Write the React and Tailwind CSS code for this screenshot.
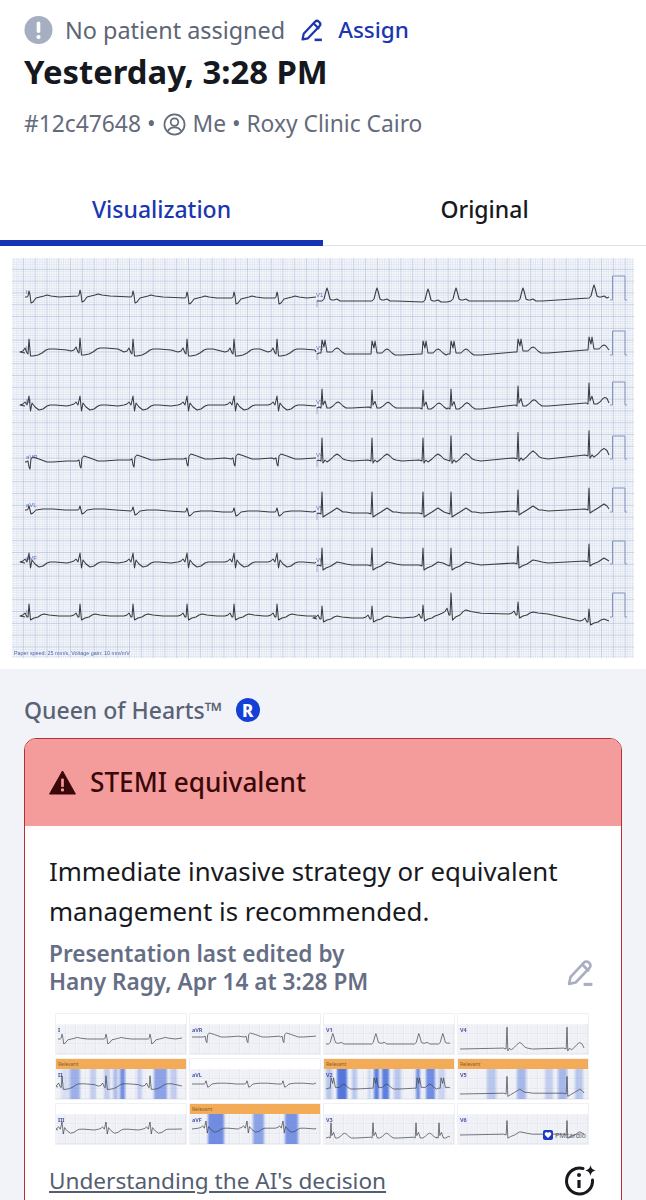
// ECG report screen
const SHAPES = {
  I: [[-2, 0], [-1, -1], [0, -6], [1, -2], [2, 6], [4, 5], [7, 1], [11, 0], [15, -1], [18, -2], [22, -1], [30, 0]],
  II: [[-9, -1], [-6, -2], [-4, -5], [-2, 0], [-1, 1], [0, -14], [1.5, 3], [4, 3], [9, 2], [13, 0], [17, -3], [20, -4], [26, -4], [38, -3]],
  III: [[-9, -1], [-6, -2], [-4, -4], [-2, -1], [0, -10], [1.5, 5], [3, -3], [6, 1], [10, 4], [14, 3], [18, 0], [21, -1], [26, -1], [38, 0]],
  aVR: [[-3, 0], [-1, -1], [0, 5], [1, 7], [2, -3], [4, -5], [10, -3], [18, 0], [24, 0], [38, -1]],
  aVL: [[-2, 0], [-1, -1], [0, -4], [1, 0], [2, 4], [4, 3], [7, 0], [14, -1], [24, -1], [36, 0]],
  V1: [[-4, 0], [-2, -2], [0, -10], [1, -13], [2, -10], [4, -2], [6, -1], [8, -1], [11, -2], [14, 0], [20, 0]],
  V2: [[-3, -1], [-1, -1], [0, -14], [2, -7], [3, -14], [5, -2], [7, -2], [10, -2], [13, -5], [15, -6], [17, -5], [20, -2], [23, 0], [30, 0]],
  V3: [[-3, -1], [-1, 0], [0, -19], [1, -3], [3, -7], [5, 0], [8, 0], [11, -2], [14, -5], [16, -6], [18, -5], [21, -2], [24, 0], [30, 0]],
  V4: [[-4, -1], [-1, 0], [0, -23], [1, 2], [3, -1], [5, 1], [9, -2], [12, -5], [15, -7], [18, -5], [21, -2], [24, -1], [30, 0]],
  V5: [[-4, -1], [-1, 0], [0, -22], [1, 3], [4, 1], [9, -2], [12, -4], [15, -6], [18, -4], [21, -2], [24, -2], [30, -1]],
  V6: [[-4, -1], [-1, 0], [0, -18], [1, 4], [4, 2], [9, 0], [12, -2], [15, -4], [20, -3], [24, -2], [30, -1]],
  R: [[-9, -1], [-6, -2], [-4, -4], [-2, 0], [-1, 0], [0, -13], [1.5, 3], [5, 1], [9, 0], [12, -2], [15, -3], [20, -2], [30, -1]],
};

const LEFT = [29, 80, 133, 187, 234, 277];
const RIGHT = [322, 372, 423, 451, 518, 589];

const ROWS = [
  { label: 'I', right: 'V1', rs: 'V1', ls: 'I', lb: [297, 296, 297, 298, 298, 298], rb: [301, 301, 302, 301, 301, 298], cal: 300, top: 276, shift: 4 },
  { label: 'II', right: 'V2', rs: 'V2', ls: 'II', lb: [353, 352, 353, 353, 353, 353], rb: [354, 355, 355, 355, 353, 351], cal: 355, top: 331 },
  { label: 'III', right: 'V3', rs: 'V3', ls: 'III', lb: [406, 406, 406, 406, 406, 406], rb: [408, 408, 409, 409, 406, 404], cal: 405, top: 382, ra: [1, 0.95, 1, 1.05, 1.05, 1.1] },
  { label: 'aVR', right: 'V4', rs: 'V4', ls: 'aVR', lb: [462, 461, 460, 459, 459, 459], rb: [461, 461, 461, 461, 459, 456], cal: 459, top: 436, ra: [1, 1, 1, 1.1, 1.15, 1.1] },
  { label: 'aVL', right: 'V5', rs: 'V5', ls: 'aVL', lb: [510, 510, 511, 512, 512, 512], rb: [514, 514, 514, 514, 512, 510], cal: 512, top: 488 },
  { label: 'aVF', right: 'V6', rs: 'V6', ls: 'III', lb: [563, 563, 563, 563, 563, 563], rb: [566, 566, 566, 566, 564, 562], cal: 564, top: 541 },
  { label: 'II', right: '', rs: 'R', ls: 'R', lb: [617, 617, 617, 617, 617, 617], rb: [619, 619, 618, 615, 615, 622], cal: 617, top: 593, ra: [1, 1, 1, 1.7, 1, 1] },
];

// one trace: the beat shape repeated at each beat, cut short where the next beat starts
function tracePath(beats, shape, bases, startX, endX, sx = 1, sy = 1, amps) {
  const pts = [[startX, bases[0]]];
  beats.forEach((b, i) => {
    const limit = i < beats.length - 1 ? beats[i + 1] + shape[0][0] * sx : endX;
    const amp = amps ? amps[i] : 1;
    shape.forEach(([dx, dy]) => {
      const x = b + dx * sx;
      if (x < limit) pts.push([x, bases[i] + dy * sy * amp]);
    });
  });
  pts.push([endX, bases[bases.length - 1] - 1]);
  return 'M' + pts.map((p) => `${p[0].toFixed(1)} ${p[1].toFixed(1)}`).join('L');
}

function MainChart() {
  return (
    <svg viewBox="12 258 622 400" className="block w-full h-[400px] blur-[0.35px]">
      <defs>
        <pattern id="fine" x="12" y="258" width="2.36" height="2.36" patternUnits="userSpaceOnUse">
          <path d="M2.36 0V2.36M0 2.36H2.36" stroke="#ced7e8" strokeWidth="0.7" fill="none" />
        </pattern>
        <pattern id="major" x="12" y="258" width="11.8" height="11.8" patternUnits="userSpaceOnUse">
          <path d="M11.8 0V11.8M0 11.8H11.8" stroke="#aab7d0" strokeWidth="0.9" fill="none" />
        </pattern>
      </defs>
      <rect x="12" y="258" width="622" height="400" fill="#f5f7fb" />
      <rect x="12" y="258" width="622" height="400" fill="url(#fine)" />
      <rect x="12" y="258" width="622" height="400" fill="url(#major)" />
      {ROWS.map((r, i) => {
        const rightBeats = RIGHT.map((b) => b + (r.shift || 0));
        return (
          <g key={i}>
            <text x="26" y={r.lb[0] - 3} fontSize="6" fill="#5b6fb8" fontFamily="Liberation Sans, sans-serif">{r.label}</text>
            {r.right && <text x="316" y={r.rb[0] - 4} fontSize="6" fill="#5b6fb8" fontFamily="Liberation Sans, sans-serif">{r.right}</text>}
            {r.right && <path d={`M317 ${r.rb[0] - 1}v7`} stroke="#8fa0c8" strokeWidth="0.8" />}
            <path d={tracePath(LEFT, SHAPES[r.ls], r.lb, 25, 316)} fill="none" stroke="#383c43" strokeWidth="1.05" strokeLinejoin="round" />
            <path d={tracePath(rightBeats, SHAPES[r.rs], r.rb, 317, 609, 1, 1, r.ra)} fill="none" stroke="#383c43" strokeWidth="1.05" strokeLinejoin="round" />
            <path d={`M610 ${r.cal}H612.5V${r.top}H625V${r.cal}H627`} fill="none" stroke="#8496bf" strokeWidth="1" />
          </g>
        );
      })}
      <text x="14" y="655" fontSize="5.4" fill="#4d68ae" fontFamily="Liberation Sans, sans-serif">Paper speed: 25 mm/s, Voltage gain: 10 mm/mV</text>
    </svg>
  );
}

const THUMBS = [
  { label: 'I', shape: 'I', beats: [6, 50, 94], base: 15 },
  { label: 'aVR', shape: 'aVR', beats: [16, 57, 93], base: 13 },
  { label: 'V1', shape: 'V1', beats: [8, 51, 94, 118], base: 20 },
  { label: 'V4', shape: 'V4', beats: [49, 109], base: 25, sy: 0.95 },
  { label: 'II', shape: 'II', beats: [6, 50, 94], base: 18, relevant: true, bands: [[5, 9, 0.12], [14, 10, 0.45], [34, 6, 0.25], [48, 6, 0.25], [57, 5, 0.35], [64, 5, 0.7], [81, 5, 0.25], [98, 13, 0.55], [114, 7, 0.25]] },
  { label: 'aVL', shape: 'aVL', beats: [16, 57, 93], base: 15, relevant: false },
  { label: 'V2', shape: 'V2', beats: [7, 50, 93, 117], base: 20, relevant: true, bands: [[2, 6, 0.3], [13, 10, 0.85], [28, 5, 0.3], [44, 3, 0.2], [50, 5, 0.8], [58, 7, 0.8], [70, 7, 0.3], [92, 4, 0.7], [102, 9, 0.7], [114, 7, 0.2]] },
  { label: 'V5', shape: 'V5', beats: [49, 109], base: 25, relevant: true, bands: [[29, 9, 0.3], [59, 9, 0.4], [87, 8, 0.25], [100, 9, 0.4], [117, 8, 0.3]] },
  { label: 'III', shape: 'III', beats: [6, 50, 94], base: 16 },
  { label: 'aVF', shape: 'III', beats: [16, 57, 93], base: 15, relevant: true, bands: [[18, 16, 0.7], [63, 11, 0.55], [95, 13, 0.65]] },
  { label: 'V3', shape: 'V3', beats: [7, 49, 92, 115], base: 24 },
  { label: 'V6', shape: 'V6', beats: [49, 109], base: 21, logo: true },
];

function Thumb({ t, index }) {
  const start = 2;
  const bases = t.beats.map(() => t.base);
  return (
    <div className="relative flex flex-col h-10 bg-white ring-1 ring-[#f0f1f5]">
      <div className={`h-2.5 pl-0.5 text-[5px] leading-[10px] ${t.relevant ? 'bg-[#f3ab57] text-[#7d5f2a]' : 'bg-white'}`}>
        {t.relevant ? 'Relevant' : ''}
      </div>
      <svg viewBox="0 0 130 30" className="block w-[130px] h-[30px] blur-[0.25px]">
        <defs>
          <pattern id={`thumbgrid${index}`} width="10" height="10" patternUnits="userSpaceOnUse">
            <path d="M2 0V10M4 0V10M6 0V10M8 0V10M0 2H10M0 4H10M0 6H10M0 8H10" stroke="#e6e8ef" strokeWidth="0.4" />
            <path d="M10 0V10M0 10H10" stroke="#c9cdd8" strokeWidth="0.5" />
          </pattern>
          <filter id={`soft${index}`} x="-20%" width="140%">
            <feGaussianBlur stdDeviation="1 0" />
          </filter>
        </defs>
        <rect width="130" height="30" fill="#f6f7fa" />
        <rect width="130" height="30" fill={`url(#thumbgrid${index})`} />
        <g filter={`url(#soft${index})`}>
          {t.bands && t.bands.map((b, i) => (
            <rect key={i} x={b[0]} width={b[1]} height="30" fill="#3a62d8" opacity={b[2]} />
          ))}
        </g>
        <text x="2" y="8" fontSize="5.5" fontWeight="700" fill="#4a55a8" fontFamily="Noto Sans, sans-serif">{t.label}</text>
        <path d={tracePath(t.beats, SHAPES[t.shape], bases, start, 126, 0.85, t.sy || 0.8)} fill="none" stroke="#3c4046" strokeWidth="0.7" strokeLinejoin="round" />
      </svg>
      {t.logo && (
        <div className="absolute right-0.5 bottom-1 flex items-center gap-0.5">
          <svg width="10" height="10" viewBox="0 0 10 10">
            <rect width="10" height="10" rx="2" fill="#1a3bc0" />
            <path d="M5 8 2 5a1.5 1.5 0 0 1 3-2 1.5 1.5 0 0 1 3 2z" fill="#fff" />
          </svg>
          <span className="text-[7px] leading-none text-[#5a5f6b] font-['Noto_Sans',sans-serif]">PMcardio</span>
        </div>
      )}
    </div>
  );
}

function PencilIcon({ className, color }) {
  return (
    <svg viewBox="0 0 28 28" className={className} fill="none" stroke={color} strokeWidth="2.6" strokeLinejoin="round" strokeLinecap="round">
      <path d="M3 25l1.3-6.5L17.5 4.3a3.2 3.2 0 0 1 4.5 0l.7.7a3.2 3.2 0 0 1 0 4.5L9.3 23.7z" />
      <path d="M16 6.5l5.5 5.5" />
      <path d="M17 25.5h8.5" strokeWidth="3" strokeLinecap="butt" />
    </svg>
  );
}

export default function App() {
  return (
    <div className="h-[1200px] overflow-hidden bg-white font-['Noto_Sans',sans-serif]">
      {/* Header */}
      <div className="pl-6 pt-4">
        <div className="flex items-center h-7">
          <svg viewBox="0 0 29 28" className="w-[29px] h-7 shrink-0">
            <circle cx="14.5" cy="14" r="14" fill="#a6aec1" />
            <rect x="12.7" y="5.5" width="3.6" height="11.5" rx="1.8" fill="#fff" />
            <circle cx="14.5" cy="21" r="2.1" fill="#fff" />
          </svg>
          <span className="ml-3 text-[23.4px] leading-7 text-[#5d6577]">No patient assigned</span>
          <PencilIcon className="ml-[15px] w-6 h-6" color="#1a36b0" />
          <span className="ml-3.5 text-[22.5px] leading-7 font-medium text-[#1a36b0]">Assign</span>
        </div>
        <h1 className="mt-2 text-[32.8px] leading-10 font-bold text-[#15181f]">Yesterday, 3:28 PM</h1>
        <div className="mt-[18px] flex items-center h-7 text-[22.8px] leading-7 text-[#646b7a]">
          <span>#12c47648 •</span>
          <svg viewBox="0 0 24 24" className="ml-2 w-[23px] h-[23px]" fill="none" stroke="#646b7a" strokeWidth="1.8">
            <circle cx="12" cy="12" r="10.5" />
            <circle cx="12" cy="9.5" r="4" />
            <path d="M5 19c1.5-3 4-4 7-4s5.5 1 7 4" />
          </svg>
          <span className="ml-1.5">Me • Roxy Clinic Cairo</span>
        </div>
      </div>

      {/* Tabs */}
      <div className="mt-10 flex">
        <div className="flex-1 h-[68px] flex items-center justify-center border-b-[6px] border-[#1436b4] text-[23px] font-medium text-[#1a36b0]">
          Visualization
        </div>
        <div className="flex-1 h-[68px] flex items-center justify-center border-b border-[#dfe2e8] pb-[5px] text-[23px] font-medium text-[#17191e]">
          Original
        </div>
      </div>

      {/* Tracing */}
      <div className="px-3 pt-3 pb-[11px]">
        <MainChart />
      </div>

      {/* Queen of Hearts */}
      <div className="bg-[#f1f3f8] px-6 pt-[25px] pb-10">
        <div className="flex items-center h-8">
          <span className="text-[23px] font-medium text-[#5a6275]">Queen of Hearts™</span>
          <span className="ml-[13px] w-6 h-6 rounded-full bg-[#1440d8] flex items-center justify-center text-white text-[17px] font-extrabold leading-none">R</span>
        </div>
        <div className="mt-3 rounded-xl border border-[#b5302f] bg-white overflow-hidden">
          <div className="h-[87px] bg-[#f49c9c] flex items-center pl-6">
            <svg viewBox="0 0 28 26" className="w-[27px] h-[25px]">
              <path d="M14 1 27.5 25H.5z" fill="#3a0808" stroke="#3a0808" strokeLinejoin="round" />
              <rect x="12.6" y="9" width="2.8" height="8.5" fill="#f49c9c" />
              <circle cx="14" cy="20.7" r="1.7" fill="#f49c9c" />
            </svg>
            <span className="ml-3.5 text-[26.2px] font-medium text-[#3a0808]">STEMI equivalent</span>
          </div>
          <div className="pl-6 pr-6 pt-[25px] pb-10">
            <p className="text-[25.8px] leading-10 text-[#17191e]">
              Immediate invasive strategy or equivalent management is recommended.
            </p>
            <div className="mt-[9px] flex items-center justify-between">
              <p className="text-[22.6px] leading-7 font-semibold text-[#666e86]">
                Presentation last edited by
                <br />
                Hany Ragy, Apr 14 at 3:28 PM
              </p>
              <PencilIcon className="mr-0.5 mt-2 w-[29px] h-[29px]" color="#a9afc0" />
            </div>
            <div className="mt-[18px] ml-[7px] grid grid-cols-[repeat(4,130px)] gap-x-1 gap-y-[5px]">
              {THUMBS.map((t, i) => (
                <Thumb key={i} t={t} index={i} />
              ))}
            </div>
            <div className="mt-[21px] flex items-center justify-between h-8">
              <a className="text-[22.6px] text-[#555d70] underline">Understanding the AI's decision</a>
              <svg viewBox="0 0 32 32" className="w-8 h-8 mr-px" fill="none" stroke="#17191e" strokeWidth="3">
                <path d="M19 3.5A13 13 0 1 0 28.5 15" strokeLinecap="round" />
                <path d="M15 15v8" strokeWidth="3.2" />
                <circle cx="15" cy="10" r="2" fill="#17191e" stroke="none" />
                <path d="M26.5 0c.7 3.5 2 4.8 5.5 5.5-3.5.7-4.8 2-5.5 5.5-.7-3.5-2-4.8-5.5-5.5 3.5-.7 4.8-2 5.5-5.500z" fill="#17191e" stroke="none" />
              </svg>
            </div>
          </div>
        </div>
      </div>
    </div>
  );
}
